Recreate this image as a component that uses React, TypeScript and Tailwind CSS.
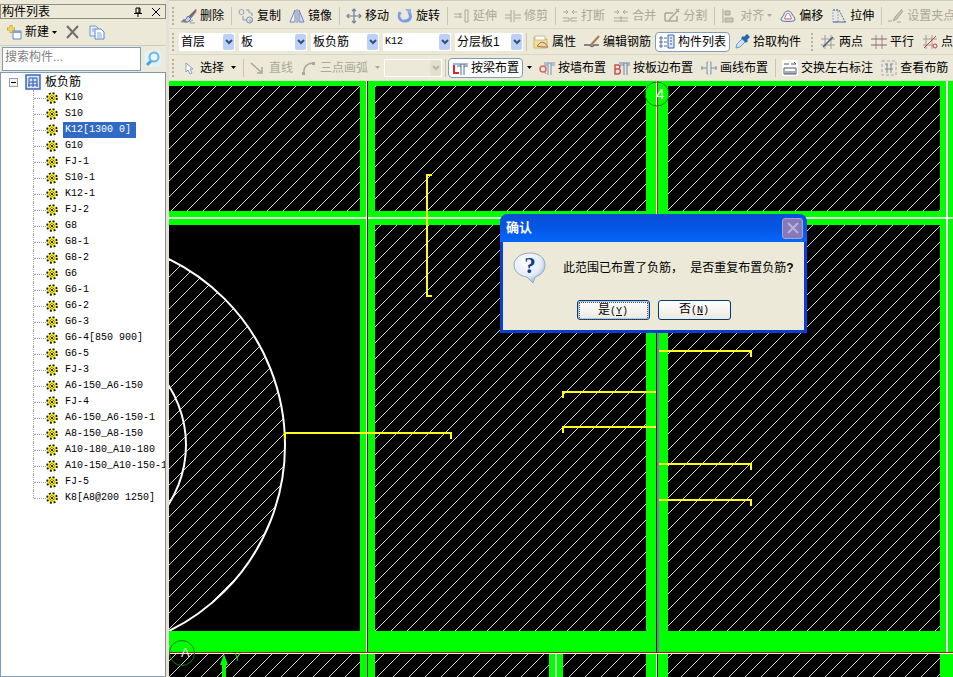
import React, { useState } from "react";

const cjk = "font-['Liberation_Sans','Noto_Sans_CJK_SC',sans-serif]";
const mono = "font-['Liberation_Mono','Noto_Sans_CJK_SC',monospace]";

const glyphs: Record<string, React.ReactNode> = {
  brush: (
    <>
      <path d="M15 1 8 8l2 2 5-6z" fill="#9a5a4a" stroke="#8d8da4" />
      <path d="M7 8l3 3-3 3H3z" fill="#c9d4f2" stroke="#5b6da8" />
      <path d="M0 14h6l-3-3zM8 14l4-2M9 15h5" fill="#777" stroke="#999" />
    </>
  ),
  copy: (
    <>
      <circle cx="3.5" cy="4" r="2.5" stroke="#8ea0bd" />
      <circle cx="11.5" cy="12" r="3" stroke="#7088b5" />
      <path d="M8 2h3v3M5 8v4h3M12 5h2v3" stroke="#8f97a8" />
      <circle cx="12" cy="12.500" r="1" stroke="#a0b0d0" />
    </>
  ),
  mirror: (
    <>
      <path d="M6 2v12H1z" fill="#eef2fb" stroke="#6c86c4" />
      <path d="M10 2v12h5z" fill="#c8d5f2" stroke="#6c86c4" />
      <path d="M8 1v14" stroke="#7688ad" />
    </>
  ),
  move: (
    <path
      d="M8 1v14M1 8h14M6 3l2-2 2 2M6 13l2 2 2-2M3 6 1 8l2 2M13 6l2 2-2 2"
      stroke="#6c7f9c"
      strokeWidth="1.2"
    />
  ),
  rotate: (
    <>
      <path d="M3 4c-2 6 0 9 5 9s7-4 4-9" stroke="#7b9ce4" strokeWidth="3" />
      <path d="M8 1h6v6z" fill="#8fadf0" />
      <path d="M4 6c-1 3 0 5 3 6" stroke="#c6d7fa" />
    </>
  ),
  extend: <path d="M0 6h8M0 9h8M11 2h3v12h-3zM6 5v5" stroke="#aaa899" />,
  trim: <path d="M0 7h6M0 10h6M10 7h6M10 10h6M6 2v12M9 2v12" stroke="#aaa899" />,
  breakIt: <path d="M1 4h5M4 2l2 2-2 2M15 4h-5M12 2l-2 2 2 2M1 10h6v3H1M15 10H9v3h6" stroke="#aaa899" />,
  merge: <path d="M1 4h5M4 2l2 2-2 2M15 4h-5M12 2l-2 2 2 2M1 10h14M1 13h14M8 8v6" stroke="#aaa899" />,
  split: <path d="M1 5h8M1 13h12V8M1 5v8M15 1 5 12M12 1l3 3" stroke="#aaa899" strokeWidth="1.5" />,
  align: <path d="M2 1v14M4 3h5v4H4zM4 10h8v4H4z" fill="#cbc8b9" stroke="#aaa899" />,
  offset: (
    <>
      <path d="M1 12c0-3 2-3 3-6 1-4 7-4 8 0 1 2 3 3 3 6 0 2-14 2-14 0z" fill="#e4e8f5" stroke="#61729a" />
      <path d="M5 11c-1-2 1-2 1-4 1-2 3-2 4 0 0 2 2 2 1 4z" fill="#fff" stroke="#c85c6e" />
    </>
  ),
  stretch: (
    <>
      <path d="M2 2h5v12H2z" stroke="#8ba4ce" strokeDasharray="2 1" />
      <path d="M2 2h6M8 2l6 12" stroke="#4668ab" strokeDasharray="2 1" />
      <path d="M2 14h13" stroke="#4668ab" />
    </>
  ),
  grip: <path d="M14 1 7 9l-2 4 4-2 6-8M0 13h4M9 14h4" fill="#c5c2b4" stroke="#aaa899" />,
  props: (
    <>
      <path d="M1 3h5l1 2h7v9H1z" fill="#f6df91" stroke="#d2b26c" />
      <path d="M2 2h10v4H2z" fill="#fff" stroke="#c8bc94" />
      <path d="M4 12l4-4 4 1 3 4H9z" fill="#f4d0a4" stroke="#9b7d53" />
    </>
  ),
  editBar: (
    <>
      <path d="M0 11h6c1 2 3 2 4 0h5" stroke="#596471" strokeWidth="1.5" />
      <path d="M15 2 7 11" stroke="#a77950" strokeWidth="2" />
    </>
  ),
  list: (
    <>
      <path d="M1 3h2v2H1zM1 7h2v2H1zM1 11h2v2H1zM5 4h3M5 8h3M5 12h3" stroke="#4f6d9c" />
      <path d="M9 1h6v13H9z" fill="#dfeafd" stroke="#3c62a8" />
      <path d="M11 4h2M11 7h2M11 10h2" stroke="#3c62a8" />
    </>
  ),
  dropper: (
    <>
      <path d="M2 14l1-4 6-6 3 3-6 6z" fill="#cfe4fb" stroke="#6c98c8" />
      <path d="M8 3l5 5M10 5l3-3 1 1-3 3" stroke="#2a66b0" strokeWidth="3" />
    </>
  ),
  twoPoint: (
    <>
      <path d="M5 1v14M11 1v14M1 5h14M1 11h14" stroke="#a09c96" />
      <path d="M3 13 13 3" stroke="#44598c" strokeWidth="1.500" />
    </>
  ),
  parallel: (
    <>
      <path d="M5 1v14M11 1v14" stroke="#8b8f98" />
      <path d="M0 5h16M0 11h16" stroke="#985c6c" />
    </>
  ),
  pointAngle: (
    <>
      <path d="M4 1v14M10 1v14M1 5h14M1 11h10" stroke="#a09c96" />
      <path d="M2 14 14 2" stroke="#c33b4b" />
      <circle cx="13" cy="12" r="2" stroke="#c33b4b" />
    </>
  ),
  cursor: <path d="M5 3v9l2-2 2 4 2-1-2-4h3z" fill="#fff" stroke="#8e9dc0" />,
  line: <path d="M1 3l10 9M12 7v6H7" stroke="#aaa899" strokeWidth="1.500" />,
  arc: (
    <>
      <path d="M3 14C2 7 6 3 13 3" stroke="#aaa899" strokeWidth="1.500" />
      <path d="M1 12h3v3H1zM11 2h3v3h-3z" fill="#aaa899" />
    </>
  ),
  beam: (
    <>
      <path d="M2 5v8h5" stroke="#d02c2c" strokeWidth="2" />
      <path d="M1 4h4M5 4h11M5 6h4M12 6h4M9 4v11M12 4v11" stroke="#4c6f9c" />
    </>
  ),
  wall: (
    <>
      <circle cx="4" cy="9" r="3" stroke="#d86668" strokeWidth="1.500" />
      <path d="M5 11l2 3" stroke="#c8696b" />
      <path d="M5 3h11M5 5h4M12 5h4M9 3v12M12 3v12" stroke="#7b94bd" />
    </>
  ),
  edge: (
    <>
      <path d="M1 5h3c3 0 2 4 0 4H1h4c2 0 2 5-1 5H1z" stroke="#c75254" strokeWidth="1.500" />
      <path d="M5 3h11M6 5h4M13 5h3M10 3v12M13 3v12" stroke="#6585b5" />
    </>
  ),
  drawLine: <path d="M0 8h6M10 8h6M6 2v12M10 2v12M6 2h1M9 2h1M6 14h1M9 14h1M1 6v4M15 6v4" stroke="#7b91b1" />,
  swap: (
    <>
      <path d="M0 0h16v16H0z" fill="#fff" />
      <path d="M2 4h5M9 4h5l-2-2M2 8h12v6H2zM4 11v3M6 11v3M8 11v3M10 11v3M12 11v3" stroke="#50586b" />
    </>
  ),
  view: (
    <>
      <path d="M1 1h14v14H1z" stroke="#a0a6ae" strokeDasharray="3 2" />
      <path d="M4 4h3M9 4h3M4 9h8M6 4v9M10 4v9" stroke="#7c8494" />
    </>
  ),
  create: (
    <>
      <path d="M5 1v8M1 5h8" stroke="#d7a928" strokeWidth="3" />
      <path d="M5 2v6M2 5h6" stroke="#ffef98" />
      <path d="M7 7h8v8H7z" fill="#fff" stroke="#5f87c9" />
      <path d="M7 8h8" stroke="#7aa0e0" strokeWidth="2" />
    </>
  ),
  remove: <path d="M2 2l11 12M13 2 2 14" stroke="#6f6f6f" strokeWidth="2" />,
  pages: (
    <>
      <path d="M1 2h6l2 2v8H1z" fill="#e5efff" stroke="#7298d5" />
      <path d="M6 5h6l3 3v7H6z" fill="#fff" stroke="#5b84cb" />
      <path d="M3 5h3M3 7h2M8 9h4M8 11h5M8 13h5" stroke="#86a8e0" />
    </>
  ),
  search: (
    <>
      <path d="M6 10 2 14" stroke="#4d9fd8" strokeWidth="3" />
      <circle cx="9" cy="6" r="4.500" fill="#e8f7ff" stroke="#66b7e8" strokeWidth="2" />
    </>
  ),
  slab: (
    <>
      <path d="M1 1h14v14H1z" fill="#d9e6fc" stroke="#3f65b5" strokeWidth="1.500" />
      <path d="M4 4h8v4H4zM8 4v9M3 11h10M4 8v5M12 8v5" stroke="#2c57b0" />
    </>
  ),
};

function Icon({ name }: { name: string }) {
  return (
    <svg className="size-4 shrink-0" viewBox="0 0 16 16" fill="none" aria-hidden="true">
      {glyphs[name]}
    </svg>
  );
}

function Caret({ muted = false }: { muted?: boolean }) {
  return (
    <svg className={`h-[3px] w-[5px] shrink-0 ${muted ? "text-[#aaa899]" : "text-black"}`} viewBox="0 0 5 3" aria-hidden="true">
      <path d="M0 0h5L2.500 3z" fill="currentColor" />
    </svg>
  );
}

type ToolProps = { icon: string; label: string; off?: boolean; active?: boolean; menu?: "tight" | "wide" };

function Tool({ icon, label, off, active, menu }: ToolProps) {
  return (
    <button
      type="button"
      disabled={off}
      className={`flex h-5 shrink-0 items-center gap-[3px] whitespace-nowrap ${
        active ? "rounded-sm border border-[#7f9db9] bg-white px-[3px]" : "px-1"
      } ${off ? "text-[#aaa899]" : "text-black"}`}
    >
      <Icon name={icon} />
      <span>{label}</span>
      {menu && (
        <span className={`flex justify-end ${menu === "wide" ? "w-[9px]" : "w-[5px]"}`}>
          <Caret muted={off} />
        </span>
      )}
    </button>
  );
}

function Sep() {
  return <span className="mr-[2px] ml-[3px] h-[18px] w-px shrink-0 bg-[#c9c5b2]" />;
}

function Grip() {
  return (
    <span className="mx-[3px] flex shrink-0 flex-col gap-[2px]">
      {[0, 1, 2, 3, 4].map((i) => (
        <span key={i} className="size-[2px] bg-[#b5b2a0]" />
      ))}
    </span>
  );
}

function Combo({ value, label, width, off }: { value: string; label: string; width: string; off?: boolean }) {
  return (
    <span className={`relative h-[18px] shrink-0 ${width}`}>
      <select
        aria-label={label}
        disabled={off}
        defaultValue={value}
        className={`block h-full w-full appearance-none pr-3 pl-[2px] leading-4 opacity-100 ${
          off ? "border border-white bg-[#ece9d8]" : "bg-white"
        }`}
      >
        <option>{value}</option>
      </select>
      <span
        className={`pointer-events-none absolute top-px right-px flex h-4 w-[11px] items-center justify-center rounded-xs ${
          off ? "bg-[#e3e0d0] text-[#b9b6a6]" : "bg-[#bdd0f8] text-[#34507f]"
        }`}
      >
        <svg className="h-[6px] w-2" viewBox="0 0 8 6" fill="none" aria-hidden="true">
          <path d="M1 1l3 3 3-3" stroke="currentColor" strokeWidth="2" />
        </svg>
      </span>
    </span>
  );
}

function Toolbars() {
  const row = "flex h-[26px] items-center border-b border-[#dbd7c5]";
  return (
    <div className="shrink-0 overflow-hidden border-t border-[#d0ccba] bg-[#ece9d8] pt-[2px]">
      <div className={row}>
        <Grip />
        <Tool icon="brush" label="删除" />
        <Sep />
        <Tool icon="copy" label="复制" />
        <Tool icon="mirror" label="镜像" />
        <Sep />
        <Tool icon="move" label="移动" />
        <Tool icon="rotate" label="旋转" />
        <Sep />
        <Tool icon="extend" label="延伸" off />
        <Tool icon="trim" label="修剪" off />
        <Sep />
        <Tool icon="breakIt" label="打断" off />
        <Tool icon="merge" label="合并" off />
        <Tool icon="split" label="分割" off />
        <Sep />
        <Tool icon="align" label="对齐" off menu="tight" />
        <Tool icon="offset" label="偏移" />
        <Tool icon="stretch" label="拉伸" />
        <Sep />
        <Tool icon="grip" label="设置夹点" off />
      </div>
      <div className={row}>
        <Grip />
        <div className="flex shrink-0 gap-1 pl-[2px]">
          <Combo label="楼层" value="首层" width="w-14" />
          <Combo label="构件类别" value="板" width="w-[68px]" />
          <Combo label="构件类型" value="板负筋" width="w-[68px]" />
          <Combo label="构件" value="K12" width={`w-[68px] ${mono} text-[10px]`} />
          <Combo label="分层" value="分层板1" width="w-[68px]" />
        </div>
        <Sep />
        <Tool icon="props" label="属性" />
        <Tool icon="editBar" label="编辑钢筋" />
        <Tool icon="list" label="构件列表" active />
        <Tool icon="dropper" label="拾取构件" />
        <div className="flex shrink-0 items-center pl-[3px]">
          <Grip />
          <Tool icon="twoPoint" label="两点" />
          <Tool icon="parallel" label="平行" />
          <Tool icon="pointAngle" label="点" />
        </div>
      </div>
      <div className={row}>
        <Grip />
        <Tool icon="cursor" label="选择" menu="wide" />
        <Sep />
        <Tool icon="line" label="直线" off />
        <Tool icon="arc" label="三点画弧" off menu="wide" />
        <Combo label="画弧方式" value="" width="w-[58px]" off />
        <Sep />
        <Tool icon="beam" label="按梁布置" active />
        <button type="button" aria-label="布置方式" className="flex h-5 w-3 shrink-0 items-center justify-center">
          <Caret />
        </button>
        <Tool icon="wall" label="按墙布置" />
        <Tool icon="edge" label="按板边布置" />
        <Tool icon="drawLine" label="画线布置" />
        <Sep />
        <Tool icon="swap" label="交换左右标注" />
        <Tool icon="view" label="查看布筋" />
      </div>
    </div>
  );
}

const members = [
  "K10", "S10", "K12[1300 0]", "G10", "FJ-1", "S10-1", "K12-1", "FJ-2", "G8", "G8-1", "G8-2", "G6", "G6-1",
  "G6-2", "G6-3", "G6-4[850 900]", "G6-5", "FJ-3", "A6-150_A6-150", "FJ-4", "A6-150_A6-150-1", "A8-150_A8-150",
  "A10-180_A10-180", "A10-150_A10-150-1", "FJ-5", "K8[A8@200 1250]",
];

function Gear() {
  return (
    <svg className="size-3 shrink-0" viewBox="0 0 12 12" fill="none" aria-hidden="true">
      <circle cx="6" cy="6" r="4.500" fill="#f4ea20" />
      <circle cx="6" cy="6" r="4.900" stroke="#1c1a00" strokeWidth="1.800" strokeDasharray="2 1.850" />
      <path d="M6 3v1M6 8v1M3 6h1M8 6h1M4 4l1 1M8 4 7 5M4 8l1-1M8 8 7 7" stroke="#5d5900" />
      <path d="M5 5h2v2H5z" fill="#2d2b00" />
    </svg>
  );
}

function Sidebar() {
  const [selected, setSelected] = useState("K12[1300 0]");
  return (
    <aside className="flex w-[169px] shrink-0 flex-col border-r-3 border-[#e4e2d8] bg-[#ece9d8] pt-1">
      <div className="flex h-[15px] shrink-0 items-center border border-[#8e8c80] pl-px">
        <h2 className="flex-1 leading-3">构件列表</h2>
        <button type="button" aria-label="固定" className="mr-2 flex">
          <svg className="size-[10px]" viewBox="0 0 10 10" fill="none" aria-hidden="true">
            <path d="M3 1h4v5H3zM6 1v5M1 6.500h8M5 7v3" stroke="#000" />
          </svg>
        </button>
        <button type="button" aria-label="关闭" className="mr-1 flex">
          <svg className="size-[10px]" viewBox="0 0 10 10" fill="none" aria-hidden="true">
            <path d="M1 1l8 8M9 1 1 9" stroke="#000" />
          </svg>
        </button>
      </div>
      <div className="flex h-[27px] shrink-0 items-center gap-2 border-b border-[#d0ccba] pl-[6px]">
        <button type="button" className="flex items-center gap-[3px]">
          <Icon name="create" />
          <span>新建</span>
          <Caret />
        </button>
        <button type="button" aria-label="删除构件" className="flex">
          <Icon name="remove" />
        </button>
        <button type="button" aria-label="复制构件" className="flex">
          <Icon name="pages" />
        </button>
      </div>
      <div className="flex h-[26px] shrink-0 items-center gap-1 pl-[2px]">
        <input
          aria-label="搜索构件"
          placeholder="搜索构件..."
          className="h-6 w-[139px] border border-[#7f9db9] bg-white px-[2px] pb-1 placeholder:text-[#808080]"
        />
        <button type="button" aria-label="搜索" className="flex rounded-xs bg-[#e2f1fa]">
          <Icon name="search" />
        </button>
      </div>
      <div className="flex-1 overflow-hidden border border-r-[#8e8c80] border-[#7f9db9] bg-white pt-px">
        <div className="flex h-4 items-center pl-2">
          <button
            type="button"
            aria-label="折叠"
            className="flex size-[9px] items-center justify-center border border-[#8ea0b5] bg-[#f4f3ec]"
          >
            <span className="h-px w-[5px] bg-black" />
          </button>
          <span className="ml-[7px] flex">
            <Icon name="slab" />
          </span>
          <span className="ml-1">板负筋</span>
        </div>
        <ul className={`text-[10px] ${mono}`}>
          {members.map((name, i) => (
            <li key={name} className="flex h-4 items-center pl-8">
              <span
                className={`w-px shrink-0 border-l border-dotted border-[#a8a89c] ${
                  i === members.length - 1 ? "h-2 self-start" : "h-4"
                }`}
              />
              <span className="h-px w-3 shrink-0 border-t border-dotted border-[#a8a89c]" />
              <Gear />
              <button
                type="button"
                onClick={() => setSelected(name)}
                className={`ml-[5px] h-4 shrink-0 pr-[5px] pl-[2px] leading-4 whitespace-pre ${
                  selected === name ? "bg-[#316ac5] text-white" : "text-black"
                }`}
              >
                {name}
              </button>
            </li>
          ))}
        </ul>
      </div>
    </aside>
  );
}

/* Plan drawing: slab hatching, beams in green, grid axes and rebar in yellow. */
function Plan() {
  return (
    <svg className="block h-full w-full bg-black" fill="none" role="img" aria-label="板负筋平面图">
      <defs>
        <pattern id="hatch" width="16" height="16" patternUnits="userSpaceOnUse">
          <path d="M-2 16 16-2M13 17l4-4" stroke="#d4d4d4" shapeRendering="crispEdges" />
        </pattern>
        <clipPath id="well">
          <path d="M169 225h191v406H169z" />
        </clipPath>
      </defs>
      <g transform="translate(-169 -81)">
        <path d="M169 81h784v596H169z" fill="url(#hatch)" />
        <path d="M169 225h191v406H169z" fill="#000" />
        <g clipPath="url(#well)" stroke="#fff" strokeWidth="2">
          <circle cx="78" cy="445" r="207" fill="url(#hatch)" />
          <circle cx="76" cy="445" r="110" />
        </g>
        <g fill="#00ff00">
          <path d="M169 81h784v5H169zM169 211h784v14H169zM169 631h784v22H169z" />
          <path d="M360 81h15v596h-15zM646 81h22v596h-22zM940 81h13v596h-13zM549 653h14v24h-14z" />
        </g>
        <g shapeRendering="crispEdges">
          <path d="M169 217h784v2H169z" fill="#d8ffd8" />
          <path d="M366 81h1v572h-1z" fill="#fff" />
          <path d="M367 81h1v596h-1z" fill="#6b1010" />
          <path d="M656 81h1v133h-1zM656 654h1v23h-1zM946 81h2v571h-2z" fill="#fff" />
          <path d="M657 81h1v133h-1z" fill="#c02020" />
          <path d="M656 332h1v320h-1zM657 654h1v23h-1z" fill="#102818" />
          <path d="M657 332h2v320h-2z" fill="#7d7f9c" />
          <path d="M555 654h2v23h-2z" fill="#c0ffc0" />
          <path d="M169 652h784v1H169z" fill="#8c2a10" />
          <path d="M169 653h784v1H169z" fill="#fff0e0" />
        </g>
        <g stroke="#ffff1e" strokeWidth="2" shapeRendering="crispEdges">
          <path d="M432 175h-5v121h5" />
          <path d="M285 439v-6h166v6" />
          <path d="M563 398v-6h93M563 433v-6h93" />
          <path d="M659 351h92v6M659 464h92v6M659 500h92v6" />
        </g>
        <circle cx="182" cy="653" r="12.500" stroke="#0b7d0b" />
        <circle cx="657" cy="94" r="12" stroke="#0b7d0b" />
        <path d="M222 677v-12h-2l4-11 4 11h-2v12z" fill="#00ff00" />
        <g className="font-['Liberation_Sans',sans-serif]">
          <text x="181" y="657" fontSize="13" fill="#eaffea">A</text>
          <text x="656" y="99" fontSize="15" fill="#eaffea">4</text>
          <text x="234" y="661" fontSize="10" fill="#2fc02f">Y</text>
        </g>
      </g>
    </svg>
  );
}

function ConfirmDialog() {
  const button =
    "h-5 w-[73px] rounded-[3px] border border-[#003c74] bg-linear-to-b from-white to-[#ebe9df] text-center leading-4";
  return (
    <div
      role="dialog"
      aria-labelledby="confirm-title"
      className="absolute top-[133px] left-[331px] w-[307px] rounded-t-lg border-x-3 border-b-3 border-[#0a3fd0] bg-[#ece9d8]"
    >
      <div className="-mx-[3px] flex h-7 items-center justify-between rounded-t-lg bg-linear-to-b from-[#0a4fd8] via-[#0556e4] to-[#0667fa] pr-1 pl-[6px]">
        <h3 id="confirm-title" className="text-[13px] font-bold text-white">确认</h3>
        <button
          type="button"
          aria-label="关闭"
          className="flex size-[21px] items-center justify-center rounded-[3px] border border-[#a9a6d6] bg-[#8679b8]"
        >
          <svg className="size-3" viewBox="0 0 12 12" fill="none" aria-hidden="true">
            <path d="M1 1l10 10M11 1 1 11" stroke="#b9b3dc" strokeWidth="2" />
          </svg>
        </button>
      </div>
      <div className="flex items-center gap-4 pt-[10px] pl-[10px]">
        <svg className="h-8 w-[34px] shrink-0" viewBox="0 0 34 32" aria-hidden="true">
          <defs>
            <radialGradient id="bubble" cx="0.4" cy="0.3" r="0.8">
              <stop offset="0" stopColor="#fff" />
              <stop offset="0.6" stopColor="#e2ecfa" />
              <stop offset="1" stopColor="#7f9cca" />
            </radialGradient>
          </defs>
          <path d="M17 1c9 0 15 5 15 12 0 6-4 10-10 12l-2 6-6-6C7 24 1 20 1 13 1 6 8 1 17 1z" fill="url(#bubble)" stroke="#98a8c0" />
          <text x="17" y="21" textAnchor="middle" fontSize="23" fontWeight="bold" fill="#123a8c" className="font-['Liberation_Serif',serif]">
            ?
          </text>
        </svg>
        <p className="whitespace-nowrap">
          此范围已布置了负筋，<span className={mono}>&nbsp;</span>是否重复布置负筋<span className="font-bold">?</span>
        </p>
      </div>
      <div className="flex justify-center gap-2 pt-4 pb-[10px]">
        <button type="button" className={`${button} bg-[#f2f1ea] p-px ring-1 ring-[#a8c3f0] ring-inset`}>
          <span className="block border border-dotted border-[#555] leading-[14px]">
            是<span className={`text-[10px] ${mono}`}>(<u>Y</u>)</span>
          </span>
        </button>
        <button type="button" className={button}>
          否<span className={`text-[10px] ${mono}`}>(<u>N</u>)</span>
        </button>
      </div>
    </div>
  );
}

export default function App() {
  return (
    <div className={`flex h-screen overflow-hidden bg-[#ece9d8] text-xs text-black ${cjk}`}>
      <Sidebar />
      <main className="flex min-w-0 flex-1 flex-col">
        <Toolbars />
        <div className="relative min-h-0 flex-1 overflow-hidden">
          <Plan />
          <ConfirmDialog />
        </div>
      </main>
    </div>
  );
}
